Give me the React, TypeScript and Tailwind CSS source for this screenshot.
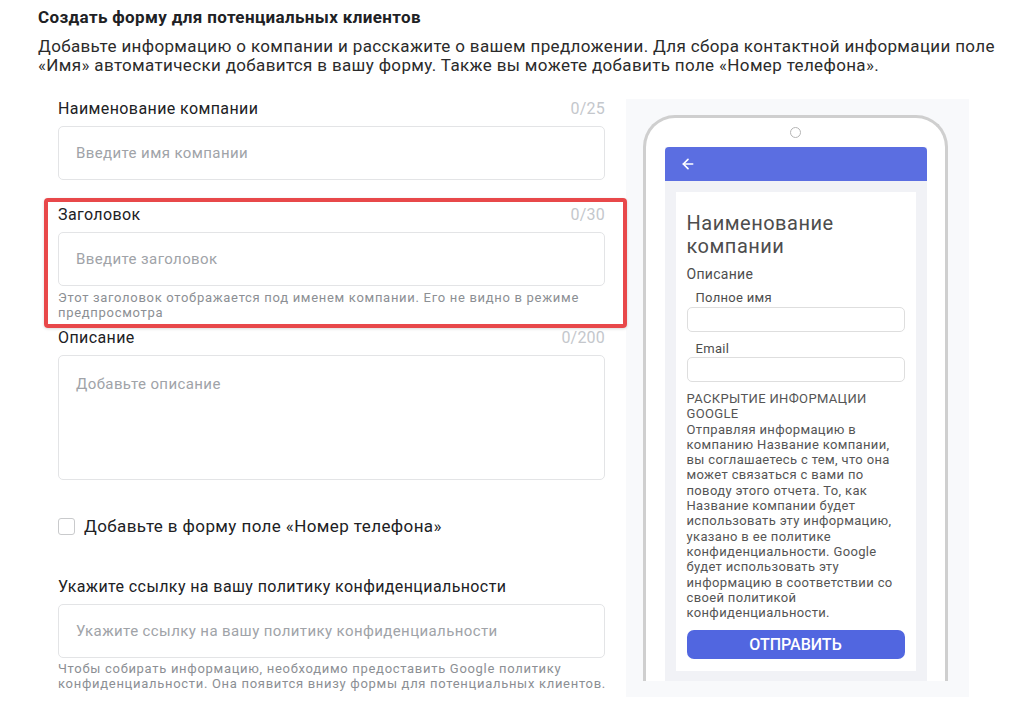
import React from 'react';
import { ArrowLeft } from 'lucide-react';

function Field({
  label,
  counter,
  placeholder,
  tall,
}: {
  label: string;
  counter?: string;
  placeholder: string;
  tall?: boolean;
}) {
  return (
    <div>
      <div className="flex items-center justify-between h-5 mb-[7px]">
        <span className="text-[16px] text-[#202124] tracking-[0.4px]">{label}</span>
        {counter && <span className="text-[16px] text-[#c4c7cc] tracking-[0.2px]">{counter}</span>}
      </div>
      <div
        className={
          tall
            ? 'h-[125px] border border-[#e3e4e6] rounded-[5px] px-[17px] pt-[17px] text-[15px] text-[#a0a3a8] tracking-[0.4px]'
            : 'h-[54px] border border-[#e3e4e6] rounded-[5px] px-[17px] flex items-center text-[15px] text-[#a0a3a8] tracking-[0.4px]'
        }
      >
        {placeholder}
      </div>
    </div>
  );
}

function PhonePreview() {
  return (
    <div className="w-[343px] h-[598px] bg-[#f8f9fb] pt-4 pl-[17px]">
      <div className="w-[305px] h-[566px] border-[3px] border-b-0 border-[#cfcfcf] rounded-t-[32px] bg-white flex flex-col items-center">
        <div className="w-[11px] h-[11px] rounded-full border border-[#b5b5b5] mt-[9px] mb-[9px]" />
        <div className="w-[262px] flex-1 bg-[#f1f2f6] flex flex-col">
          <div className="h-[34px] bg-[#5b6ee1] rounded-t-[4px] flex items-center pl-[15px]">
            <ArrowLeft size={16} strokeWidth={2.5} className="text-white" />
          </div>
          <div className="mx-[11px] mt-[11px] mb-[10px] flex-1 bg-white px-[11px] pt-[20px] text-[#4d4d4d]">
            <div className="text-[20px] leading-[23px] tracking-[0.5px]">
              Наименование
              <br />
              компании
            </div>
            <div className="text-[14px] leading-[18px] mt-[7px] tracking-[0.3px]">Описание</div>
            <div className="text-[13px] leading-[16px] pl-[9px] mt-[7px] tracking-[0.3px]">Полное имя</div>
            <div className="h-[25px] border border-[#dedede] rounded-[5px] mt-[1px]" />
            <div className="text-[13px] leading-[16px] pl-[9px] mt-[9px] tracking-[0.3px]">Email</div>
            <div className="h-[25px] border border-[#dedede] rounded-[5px]" />
            <div className="text-[13px] leading-[15.3px] mt-[9px] tracking-[0.35px] text-[#555] whitespace-nowrap">
              РАСКРЫТИЕ ИНФОРМАЦИИ
              <br />
              GOOGLE
              <br />
              Отправляя информацию в
              <br />
              компанию Название компании,
              <br />
              вы соглашаетесь с тем, что она
              <br />
              может связаться с вами по
              <br />
              поводу этого отчета. То, как
              <br />
              Название компании будет
              <br />
              использовать эту информацию,
              <br />
              указано в ее политике
              <br />
              конфиденциальности. Google
              <br />
              будет использовать эту
              <br />
              информацию в соответствии со
              <br />
              своей политикой
              <br />
              конфиденциальности.
            </div>
            <button className="mt-[10px] w-full h-[29px] rounded-[7px] bg-[#5166e0] text-white text-[16px] font-medium">
              ОТПРАВИТЬ
            </button>
          </div>
        </div>
      </div>
    </div>
  );
}

export default function App() {
  return (
    <div className="w-[1024px] h-[712px] bg-white overflow-hidden font-['Roboto',sans-serif] pl-[38px] pt-[7px]">
      <h1 className="text-[17px] leading-5 font-bold text-[#202124] tracking-[0.35px]">
        Создать форму для потенциальных клиентов
      </h1>
      <p className="mt-[10px] text-[17px] leading-[19px] text-[#2b2b2b] tracking-[0.35px] whitespace-nowrap">
        Добавьте информацию о компании и расскажите о вашем предложении. Для сбора контактной информации поле
        <br />
        «Имя» автоматически добавится в вашу форму. Также вы можете добавить поле «Номер телефона».
      </p>

      <div className="flex mt-[24px]">
        <div className="w-[547px] ml-5">
          <Field label="Наименование компании" counter="0/25" placeholder="Введите имя компании" />

          <div className="relative mt-[25px]">
            <div className="absolute -left-[14px] -right-[22px] -top-[7px] -bottom-[8px] border-4 border-[#e8484a] rounded-[4px] shadow-[0_1px_3px_rgba(0,0,0,0.15)]" />
            <Field label="Заголовок" counter="0/30" placeholder="Введите заголовок" />
            <p className="mt-[4px] text-[13px] leading-[15px] text-[#8c8f94] tracking-[0.7px]">
              Этот заголовок отображается под именем компании. Его не видно в режиме
              <br />
              предпросмотра
            </p>
          </div>

          <div className="mt-[8px]">
            <Field label="Описание" counter="0/200" placeholder="Добавьте описание" tall />
          </div>

          <label className="flex items-center gap-[9px] mt-[38px] h-[17px]">
            <span className="w-[17px] h-[17px] border border-[#c9cacc] rounded-[3px] bg-white shrink-0" />
            <span className="text-[17px] text-[#202124] tracking-[0.4px]">Добавьте в форму поле «Номер телефона»</span>
          </label>

          <div className="mt-[42px]">
            <Field
              label="Укажите ссылку на вашу политику конфиденциальности"
              placeholder="Укажите ссылку на вашу политику конфиденциальности"
            />
            <p className="mt-[3px] text-[13px] leading-[15px] text-[#8c8f94] tracking-[0.7px] whitespace-nowrap">
              Чтобы собирать информацию, необходимо предоставить Google политику
              <br />
              конфиденциальности. Она появится внизу формы для потенциальных клиентов.
            </p>
          </div>
        </div>

        <div className="ml-[21px]">
          <PhonePreview />
        </div>
      </div>
    </div>
  );
}
